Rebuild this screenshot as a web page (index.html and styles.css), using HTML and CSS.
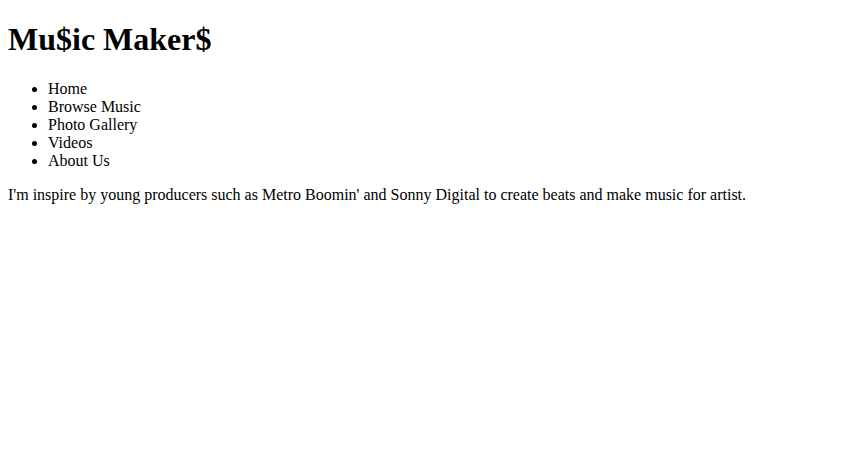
FILE: index.html
```html
<!DOCTYPE html>
<html>
<head>
<meta charset="utf-8">
<title>Mu$ic Maker$</title>
<link rel="stylesheet" href="styles.css">
</head>
<body class="page">
<h1 class="title">Mu$ic Maker$</h1>
<ul class="nav">
<li>Home</li>
<li>Browse Music</li>
<li>Photo Gallery</li>
<li>Videos</li>
<li>About Us</li>
</ul>
<p class="intro">I'm inspire by young producers such as Metro Boomin' and Sonny Digital to create beats and make music for artist.</p>
</body>
</html>
```
FILE: styles.css
```css
.page {
  margin: 0 8px 8px;
  font-family: "Liberation Serif", "Times New Roman", serif;
  font-size: 16px;
  color: #000;
  background: #fff;
}
.title {
  font-size: 32px;
  font-weight: bold;
  margin: 21.44px 0;
}
.nav {
  margin: 16px 0;
  padding-left: 40px;
  list-style: disc;
}
.intro {
  margin: 16px 0;
}
```
